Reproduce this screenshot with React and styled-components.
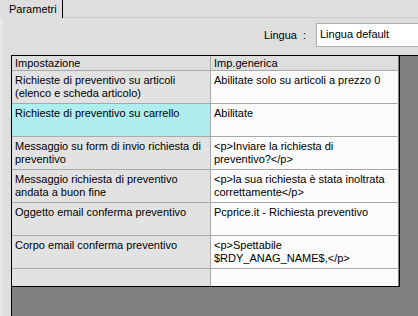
import React from "react";
import styled, { createGlobalStyle } from "styled-components";

const GlobalStyle = createGlobalStyle`
  body {
    margin: 0;
    background: #dedede;
    font-family: "Liberation Sans", Arial, sans-serif;
    font-size: 11px;
    color: #000;
  }
`

const Window = styled.div`
  width: 418px;
  height: 316px;
  overflow: hidden;
  display: flex;
  flex-direction: column;
  background: #dedede;
`

const TabStrip = styled.div`
  height: 18px;
  display: flex;
  border-bottom: 1px solid #cacaca;
  box-sizing: border-box;
`

const Tab = styled.div`
  width: 63px;
  height: 18px;
  box-sizing: border-box;
  padding: 3px 0 0 9px;
  border-right: 1px solid #000;
  background: #dedede;
  line-height: 13px;
`

const Panel = styled.div`
  flex: 1;
  display: flex;
  flex-direction: column;
  padding-left: 11px;
  border-left: 3px solid #e6e6e6;
  box-sizing: border-box;
  min-height: 0;
`

const LangRow = styled.div`
  display: flex;
  justify-content: flex-end;
  align-items: center;
  height: 24px;
  margin-top: 5px;
  margin-right: -20px;
`

const LangLabel = styled.span`
  margin-right: 10px;
`

const Colon = styled.span`
  margin-left: 6px;
`

const LangBox = styled.div`
  width: 122px;
  height: 24px;
  box-sizing: border-box;
  background: #fff;
  border: 1px solid #adadad;
  padding: 4px 0 0 3px;
  line-height: 13px;
`

const GridArea = styled.div`
  flex: 1;
  margin-top: 8px;
  margin-left: -3px;
  background: #808080;
  border-left: 1px solid #000;
  border-top: 1px solid #000;
  margin-right: -20px;
`

const Table = styled.div`
  width: 388px;
  border-right: 1px solid #000;
  border-bottom: 1px solid #000;
  box-sizing: border-box;
`

const Row = styled.div`
  display: grid;
  grid-template-columns: 199px 187px;
  height: ${(p) => p.$h}px;
  border-bottom: 1px solid #a9a9a9;
  &:last-child {
    border-bottom: none;
  }
`

const Cell = styled.div`
  padding: ${(p) => (p.$head ? "1px 3px 0" : "3px 8px 0 3px")};
  line-height: 13px;
  background: ${(p) => p.$bg};
  border-right: ${(p) => (p.$first ? "1px solid #a9a9a9" : "none")};
  overflow: hidden;
`

const rows = [
  ["Richieste di preventivo su articoli (elenco e scheda articolo)", "Abilitate solo su articoli a prezzo 0"],
  ["Richieste di preventivo su carrello", "Abilitate", true],
  ["Messaggio su form di invio richiesta di preventivo", "<p>Inviare la richiesta di preventivo?</p>"],
  ["Messaggio richiesta di preventivo andata a buon fine", "<p>la sua richiesta è stata inoltrata correttamente</p>"],
  ["Oggetto email conferma preventivo", "Pcprice.it - Richiesta preventivo"],
  ["Corpo email conferma preventivo", "<p>Spettabile $RDY_ANAG_NAME$,</p>"],
]

const App = () => {
  return (
    <Window>
      <GlobalStyle />
      <TabStrip>
        <Tab>Parametri</Tab>
      </TabStrip>
      <Panel>
        <LangRow>
          <LangLabel>
            Lingua<Colon>:</Colon>
          </LangLabel>
          <LangBox>Lingua default</LangBox>
        </LangRow>
        <GridArea>
          <Table>
            <Row $h={14}>
              <Cell $head $first $bg="#dedede">Impostazione</Cell>
              <Cell $head $bg="#dedede">Imp.generica</Cell>
            </Row>
            {rows.map(([name, value, sel]) => (
              <Row key={name} $h={32}>
                <Cell $first $bg={sel ? "#afeeee" : "#e2e2e2"}>{name}</Cell>
                <Cell $bg="#fbfbfb">{value}</Cell>
              </Row>
            ))}
            <Row $h={17}>
              <Cell $first $bg="#e2e2e2" />
              <Cell $bg="#fbfbfb" />
            </Row>
          </Table>
        </GridArea>
      </Panel>
    </Window>
  );
};

export default App;
